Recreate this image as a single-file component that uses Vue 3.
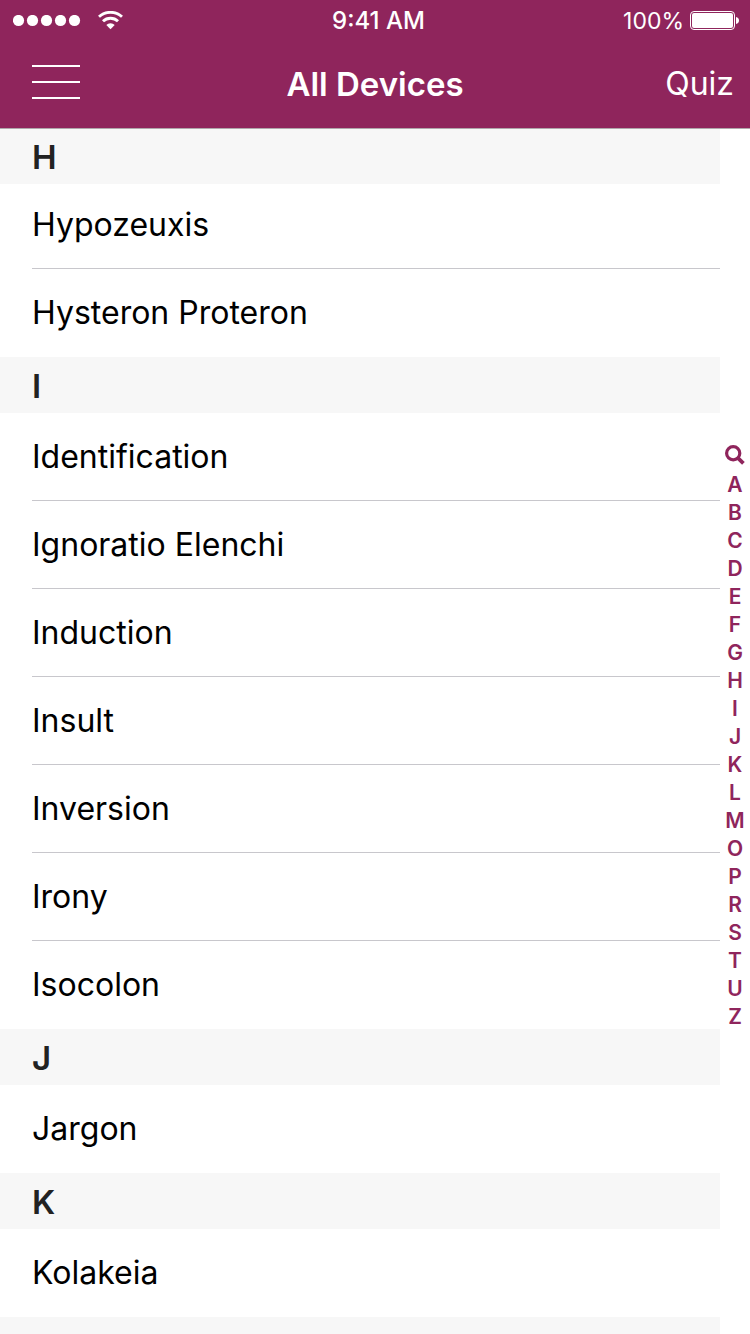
<script setup>
const sections = [
  { letter: 'H', items: ['Hypozeuxis', 'Hysteron Proteron'] },
  {
    letter: 'I',
    items: ['Identification', 'Ignoratio Elenchi', 'Induction', 'Insult', 'Inversion', 'Irony', 'Isocolon'],
  },
  { letter: 'J', items: ['Jargon'] },
  { letter: 'K', items: ['Kolakeia'] },
]
const letters = 'ABCDEFGHIJKLMOPRSTUZ'.split('')
</script>

<template>
  <div class="app">
    <header class="top">
      <div class="status">
        <div class="status-side">
          <svg width="68" height="12" viewBox="0 0 68 12" fill="#fff" aria-label="Signal">
            <circle v-for="n in 5" :key="n" :cx="n * 14 - 8.5" cy="5.5" r="5.6" />
          </svg>
          <svg width="26" height="20" viewBox="0 0 26 20" aria-label="Wi-Fi">
            <g fill="none" stroke="#fff" stroke-width="2.9">
              <path d="M1 5.800A17 17 0 0 1 24 5.800" />
              <path d="M5 10.300A10.800 10.800 0 0 1 20 10.300" />
            </g>
            <path d="M12.500 18.300L8.300 14A6 6 0 0 1 16.700 14Z" fill="#fff" />
          </svg>
        </div>
        <span class="time">9:41 AM</span>
        <div class="status-side end">
          <span class="charge">100%</span>
          <svg width="50" height="20" viewBox="0 0 50 20" aria-label="Battery">
            <rect x="0.5" y="0.5" width="44" height="18" rx="3.5" fill="none" stroke="#fff" />
            <rect x="2" y="2" width="41" height="15" rx="2" fill="#fff" />
            <path d="M46 6C50 6.5 50 12.500 46 13Z" fill="#fff" />
          </svg>
        </div>
      </div>
      <div class="navbar">
        <div class="nav-side">
          <button class="menu" type="button" aria-label="Menu">
            <span></span><span></span><span></span>
          </button>
        </div>
        <h1>All Devices</h1>
        <div class="nav-side end">
          <button class="quiz" type="button">Quiz</button>
        </div>
      </div>
    </header>

    <main class="body">
      <div class="list">
        <section v-for="s in sections" :id="'section-' + s.letter" :key="s.letter">
          <h2>{{ s.letter }}</h2>
          <ul>
            <li v-for="item in s.items" :key="item"><a href="#">{{ item }}</a></li>
          </ul>
        </section>
        <div class="rest"></div>
      </div>
      <nav class="index" aria-label="Alphabetical index">
        <button class="search" type="button" aria-label="Search">
          <svg width="20" height="20" viewBox="0 0 20 20" fill="none" stroke="#8f255c">
            <circle cx="8.200" cy="8.200" r="6.600" stroke-width="3.200" />
            <path d="M12.800 12.800L18.400 18.400" stroke-width="3.800" />
          </svg>
        </button>
        <a v-for="l in letters" :key="l" :href="'#section-' + l">{{ l }}</a>
      </nav>
    </main>
  </div>
</template>

<style>
body {
  margin: 0;
  background: #fff;
}
</style>

<style scoped>
.app {
  display: flex;
  flex-direction: column;
  height: 100vh;
  overflow: hidden;
  background: #fff;
  color: #000;
  font-family: Inter, "Liberation Sans", sans-serif;
}
.top {
  flex: none;
  background: #8f255c;
  color: #fff;
}
.status {
  display: flex;
  align-items: center;
  height: 42px;
  padding: 0 10px 0 13px;
}
.status-side {
  display: flex;
  flex: 1;
  align-items: center;
  gap: 17px;
}
.end {
  justify-content: flex-end;
}
.status-side.end {
  gap: 6px;
}
.time,
.charge {
  line-height: 40px;
}
.time {
  margin-left: 4px;
  font-size: 24px;
  font-weight: 500;
}
.charge {
  font-size: 23px;
}
.navbar {
  display: flex;
  box-sizing: border-box;
  align-items: center;
  height: 86px;
  padding: 0 16px 2px 32px;
}
.nav-side {
  display: flex;
  flex: 1;
}
.navbar h1 {
  margin: 0 16px 0 0;
  font-size: 33px;
  font-weight: 600;
  line-height: 40px;
}
button {
  padding: 0;
  border: 0;
  background: none;
  color: inherit;
  font-family: inherit;
  cursor: pointer;
}
a {
  color: inherit;
  text-decoration: none;
}
.menu {
  display: flex;
  flex-direction: column;
  gap: 14px;
  width: 48px;
  padding-bottom: 4px;
}
.menu span {
  height: 2px;
  background: #fff;
}
.quiz {
  font-size: 32px;
  line-height: 40px;
}
.body {
  display: flex;
  flex: 1;
  min-height: 0;
}
.list {
  display: flex;
  flex: 1;
  flex-direction: column;
  overflow: hidden auto;
  scrollbar-width: none;
}
section {
  flex: none;
}
.rest {
  flex: 1;
  background: #f7f7f7;
}
h2 {
  position: relative;
  z-index: 1;
  height: 56px;
  margin: 0;
  padding: 0 32px;
  background: #f7f7f7;
  color: #222;
  font-size: 33px;
  font-weight: 600;
  line-height: 58px;
}
section:first-child h2 {
  margin-bottom: -3px;
  box-shadow: inset 0 1px #b0a8ac;
}
ul {
  margin: 0;
  padding: 0 0 0 32px;
  list-style: none;
}
li {
  box-sizing: border-box;
  height: 88px;
  border-bottom: 1px solid #c8c7cc;
}
li:last-child {
  border-bottom-color: transparent;
}
li a {
  display: block;
  font-size: 32px;
  line-height: 87px;
}
.index {
  display: flex;
  flex: none;
  flex-direction: column;
  align-items: center;
  justify-content: center;
  width: 30px;
  padding-top: 12px;
  box-shadow: inset 0 1px #b0a8ac;
  color: #8f255c;
  font-size: 21px;
  font-weight: 600;
  line-height: 28px;
}
.search {
  display: flex;
  align-items: center;
  height: 28px;
  padding-bottom: 4px;
}
</style>
